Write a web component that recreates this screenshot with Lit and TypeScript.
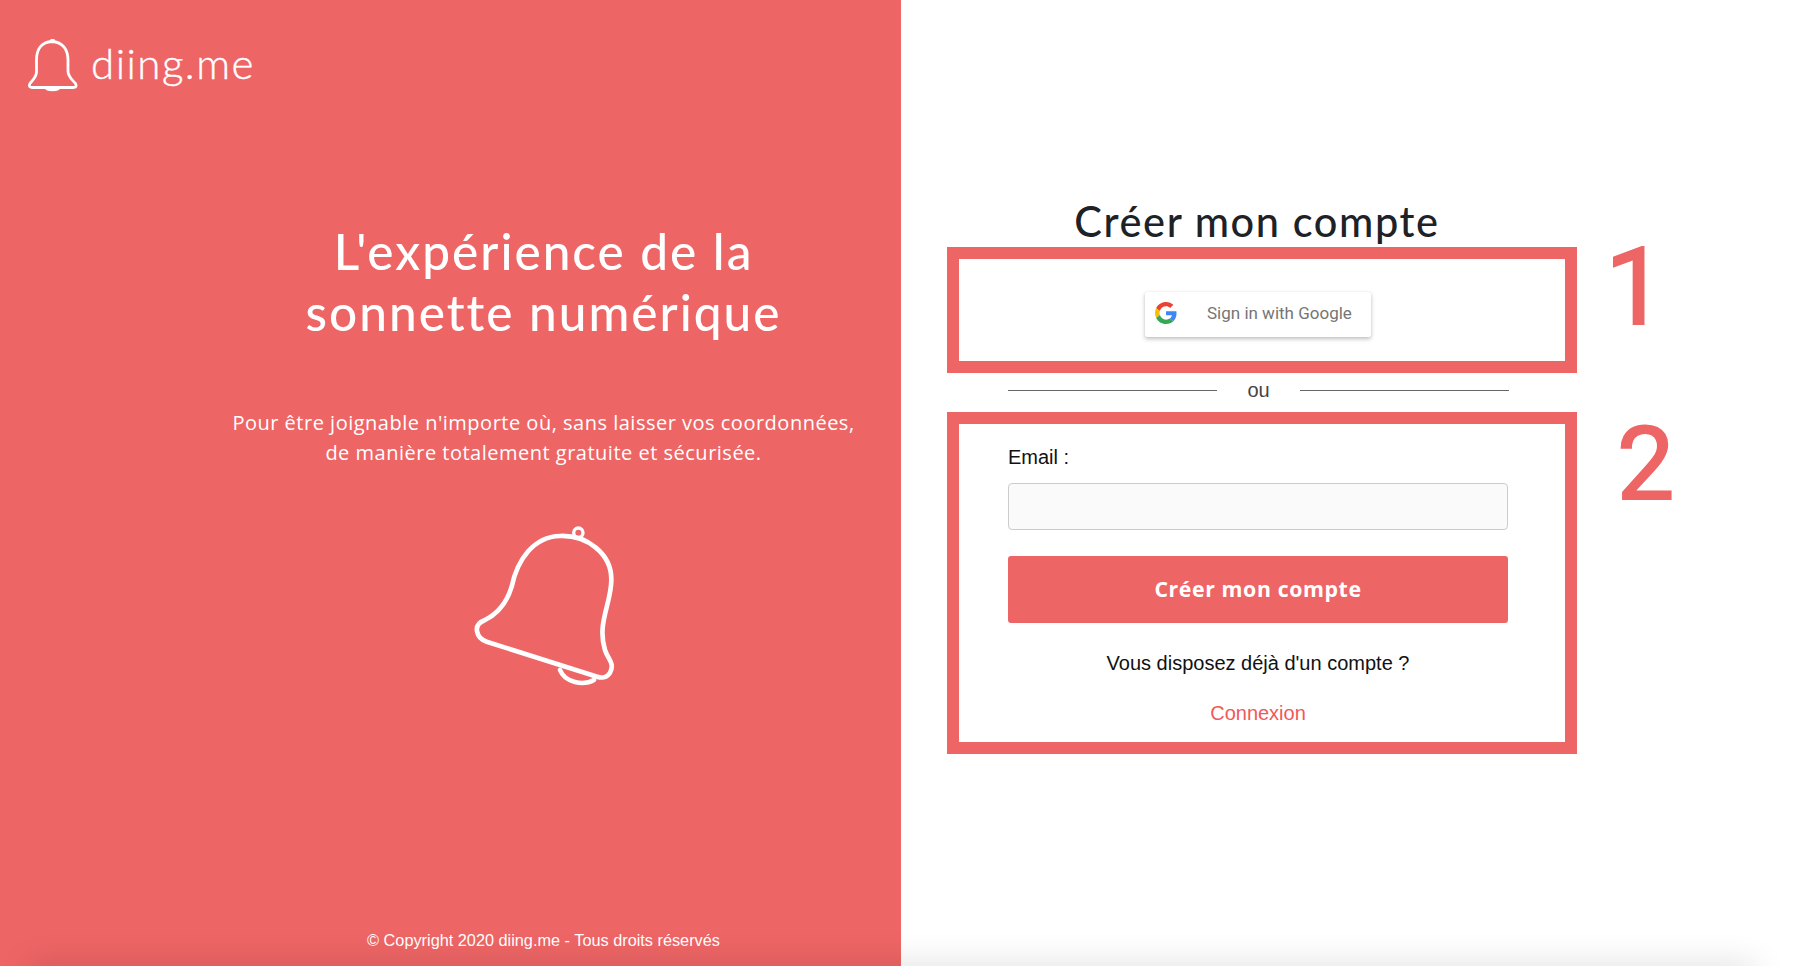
import { LitElement, html, css } from "lit";
import { customElement } from "lit/decorators.js";

@customElement("app-root")
export class AppRoot extends LitElement {
  static styles = css`
    :host { display: block; position: relative; width: 100%; height: 966px; overflow: hidden; background: #fff; font-family: "Liberation Sans", Arial, sans-serif; }
    .page { display: flex; height: 966px; }
    .left { width: 901px; flex: none; background: #ee6565; color: #fff; display: flex; flex-direction: column; box-sizing: border-box; }
    .logo { display: flex; align-items: center; padding: 40px 0 0 27px; height: 52px; gap: 10px; }
    .logo svg { width: 54px; height: 54px; flex: none; }
    .logo span { font-family: Lato, sans-serif; font-weight: 300; font-size: 42px; letter-spacing: 1.5px; line-height: 52px; position: relative; top: -3px; -webkit-text-stroke: 0.4px #fff; }
    .hero { margin: 129px 0 0 186px; text-align: center; display: flex; flex-direction: column; align-items: center; }
    h1 { margin: 0; font-family: Lato, sans-serif; font-weight: 500; font-size: 49.5px; line-height: 61px; letter-spacing: 2px; }
    .hero p { margin: 65px 0 0; font-family: "Open Sans", sans-serif; font-size: 20px; line-height: 30px; letter-spacing: 0.5px; }
    .big-bell { width: 220px; height: 200px; margin: 32px 0 0 12px; display: block; }
    .copy { margin: auto 0 17px 186px; text-align: center; font-size: 16.3px; line-height: 18px; }
    .right { flex: 1; padding: 195px 0 0 46px; box-sizing: border-box; }
    .title { width: 620px; margin: 0; text-align: center; font-family: Lato, sans-serif; font-weight: 500; font-size: 41.5px; line-height: 52px; color: #1e2226; letter-spacing: 1.6px; }
    .row { display: flex; align-items: flex-start; }
    .box { width: 630px; box-sizing: border-box; border: 12px solid #ee6565; flex: none; }
    .box1 { height: 126px; display: flex; justify-content: center; align-items: center; padding: 9px 8px 0 0; }
    .gbtn { width: 226px; height: 45px; display: flex; align-items: center; box-sizing: border-box; padding: 0 0 3px 10px; gap: 30px; background: #fff; border-radius: 2px; box-shadow: 0 2px 4px rgba(0,0,0,.25), 0 0 1px rgba(0,0,0,.12); color: #757575; font-family: Roboto, sans-serif; font-size: 17px; }
    .gbtn svg { width: 22px; height: 22px; flex: none; }
    .digit { font-family: Roboto, sans-serif; color: #ee6565; line-height: 80px; -webkit-text-stroke: 2px #ee6565; }
    .d1 { font-size: 108px; margin: 0 0 0 28px; }
    .d2 { font-size: 102px; margin: 12px 0 0 40px; }
    .divider { width: 501px; margin: 7px 0 11px 61px; display: flex; align-items: center; gap: 30px; color: #444; font-size: 20px; line-height: 21px; height: 21px; }
    .divider i { flex: 1; height: 1px; background: #666; }
    .box2 { height: 342px; padding: 22px 57px 0 49px; }
    label { display: block; font-size: 20px; line-height: 23px; color: #111; }
    .input { display: block; width: 100%; height: 47px; margin-top: 14px; box-sizing: border-box; background: #fafafa; border: 1.5px solid #ccc; border-radius: 4px; }
    .submit { display: block; width: 100%; height: 67px; margin-top: 26px; padding: 0 0 2px; border: 0; border-radius: 3px; background: #ee6565; color: #fff; font-family: "Open Sans", sans-serif; font-weight: 700; font-size: 21.3px; letter-spacing: 0.6px; }
    .q { margin: 29px 0 0; text-align: center; font-size: 20px; line-height: 22px; color: #111; }
    .link { display: block; margin-top: 28px; text-align: center; font-size: 20px; line-height: 22px; color: #f25858; text-decoration: none; }
    .shade { position: absolute; left: 30px; right: 45px; bottom: -20px; height: 20px; box-shadow: 0 0 34px rgba(0,0,0,.16); pointer-events: none; }
  `;

  render() {
    return html`
      <div class="page">
        <section class="left">
          <div class="logo">
            <svg viewBox="0 0 54 54" fill="none" stroke="#fff" stroke-width="2.8" stroke-linejoin="round">
              <path d="M25 2.500C14 3 9.500 11 9.500 21V33C9.500 38 6 40.500 3 44.500C1.500 47 2.500 48.500 5 48.500H46C49 48.500 50 47 48.500 44.500C45 40.500 41 38 41 32V21C41 11 36 3 25 2.500Z"/>
              <path d="M19 48.500C20 51.500 31 51.500 32 48.500"/>
              <circle cx="25.500" cy="1.800" r="1" />
            </svg>
            <span>diing.me</span>
          </div>
          <div class="hero">
            <h1>L'expérience de la<br />sonnette numérique</h1>
            <p>Pour être joignable n'importe où, sans laisser vos coordonnées,<br />de manière totalement gratuite et sécurisée.</p>
            <svg class="big-bell" viewBox="0 0 660 600" fill="none" stroke="#fff" stroke-width="14" stroke-linejoin="round" stroke-linecap="round">
              <path d="M135 360C175 340 200 310 215 260C232 180 280 110 360 108C440 105 515 160 514 240C514 310 470 370 495 450C505 480 525 490 510 518C498 537 480 535 455 525L140 425C110 415 95 375 135 360Z"/>
              <path d="M360 510C375 548 430 558 462 540"/>
              <circle cx="415" cy="98" r="14" stroke-width="10"/>
            </svg>
          </div>
          <div class="copy">© Copyright 2020 diing.me - Tous droits réservés</div>
        </section>
        <section class="right">
          <h2 class="title">Créer mon compte</h2>
          <div class="row">
            <div class="box box1">
              <div class="gbtn">
                <svg viewBox="0 0 48 48">
                  <path fill="#EA4335" d="M24 9.500c3.540 0 6.710 1.220 9.210 3.600l6.850-6.850C35.900 2.380 30.470 0 24 0 14.620 0 6.510 5.380 2.560 13.220l7.980 6.190C12.430 13.720 17.740 9.500 24 9.500z"/>
                  <path fill="#4285F4" d="M46.980 24.550c0-1.570-.15-3.090-.38-4.550H24v9.020h12.940c-.58 2.960-2.260 5.480-4.780 7.180l7.730 6c4.510-4.180 7.090-10.360 7.090-17.650z"/>
                  <path fill="#FBBC05" d="M10.530 28.590c-.48-1.450-.76-2.990-.76-4.590s.27-3.140.76-4.590l-7.980-6.190C.92 16.460 0 20.120 0 24c0 3.880.92 7.540 2.560 10.780l7.970-6.190z"/>
                  <path fill="#34A853" d="M24 48c6.480 0 11.930-2.130 15.890-5.810l-7.730-6c-2.150 1.450-4.920 2.300-8.160 2.300-6.260 0-11.570-4.220-13.470-9.910l-7.980 6.190C6.510 42.620 14.620 48 24 48z"/>
                </svg>
                <span>Sign in with Google</span>
              </div>
            </div>
            <div class="digit d1">1</div>
          </div>
          <div class="divider"><i></i><span>ou</span><i></i></div>
          <div class="row">
            <div class="box box2">
              <label>Email :</label>
              <div class="input"></div>
              <button class="submit">Créer mon compte</button>
              <p class="q">Vous disposez déjà d'un compte ?</p>
              <a class="link">Connexion</a>
            </div>
            <div class="digit d2">2</div>
          </div>
        </section>
      </div>
      <div class="shade"></div>
    `;
  }
}
